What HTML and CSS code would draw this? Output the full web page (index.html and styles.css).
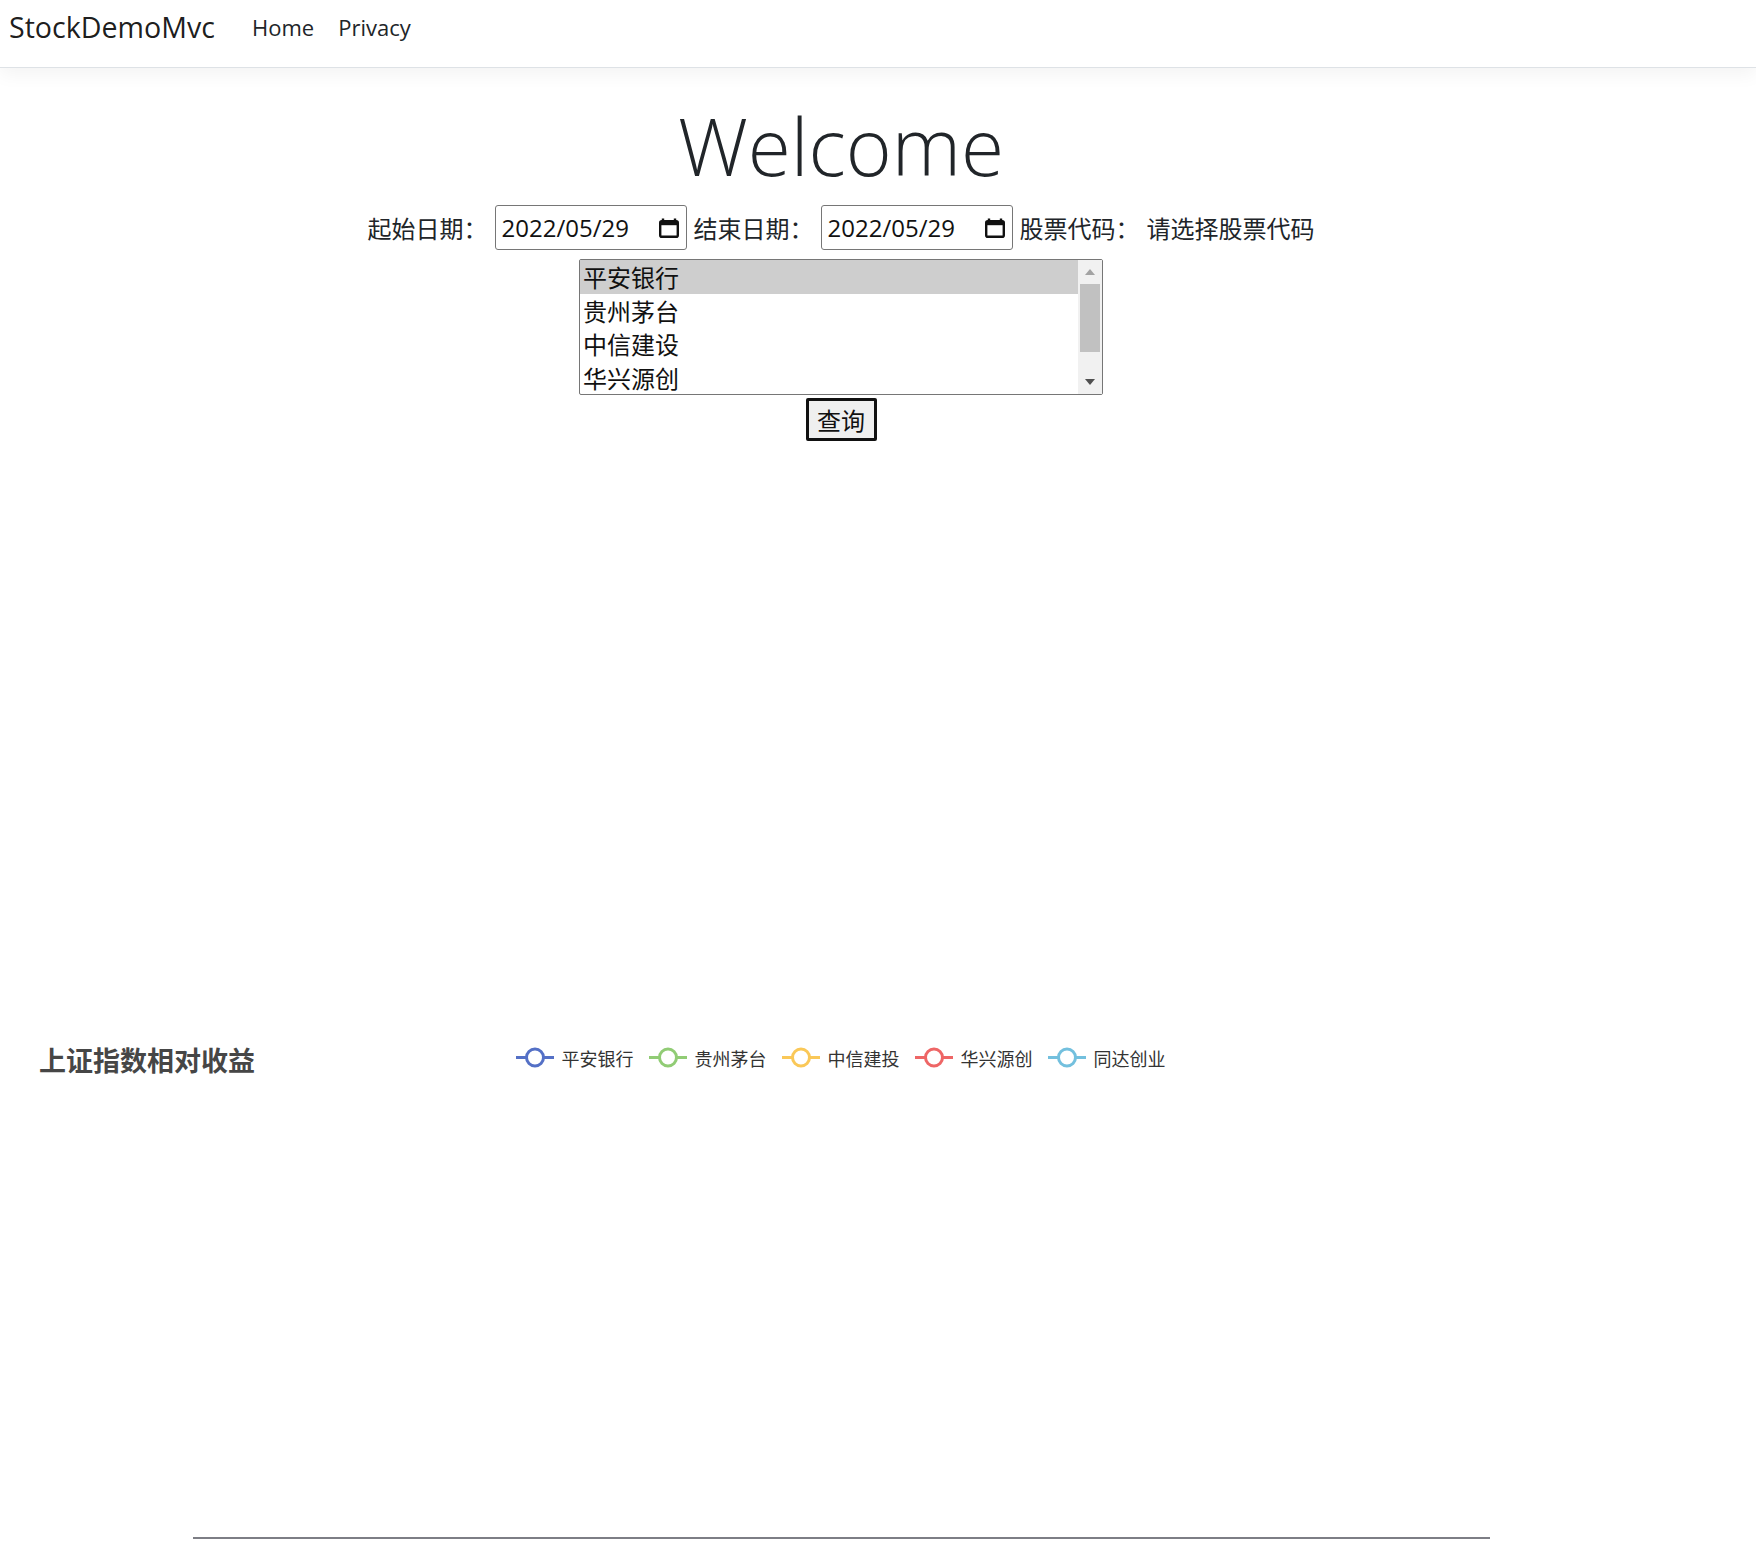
FILE: index.html
```html
<!DOCTYPE html>
<html lang="zh-CN">
<head>
<meta charset="utf-8">
<title>StockDemoMvc</title>
<link rel="stylesheet" href="styles.css">
</head>
<body>
<header class="navbar">
  <a class="brand" href="#">StockDemoMvc</a>
  <nav class="nav">
    <a class="nav-link" href="#">Home</a>
    <a class="nav-link" href="#">Privacy</a>
  </nav>
</header>
<main class="main">
  <section class="hero">
    <h1 class="title">Welcome</h1>
    <form class="query">
      <div class="query-row">
        <label class="label">起始日期：</label>
        <div class="date">
          <span class="date-text">2022/05/29</span>
          <svg class="cal" viewBox="0 0 22 22" width="22" height="22"><path d="M5 1.5v3M17 1.5v3" stroke="#111" stroke-width="2.4" fill="none"/><rect x="2.2" y="4.2" width="17.6" height="15.6" rx="1.6" fill="none" stroke="#111" stroke-width="2.4"/><rect x="2.2" y="4.2" width="17.6" height="4" fill="#111"/></svg>
        </div>
        <label class="label">结束日期：</label>
        <div class="date">
          <span class="date-text">2022/05/29</span>
          <svg class="cal" viewBox="0 0 22 22" width="22" height="22"><path d="M5 1.5v3M17 1.5v3" stroke="#111" stroke-width="2.4" fill="none"/><rect x="2.2" y="4.2" width="17.6" height="15.6" rx="1.6" fill="none" stroke="#111" stroke-width="2.4"/><rect x="2.2" y="4.2" width="17.6" height="4" fill="#111"/></svg>
        </div>
        <label class="label">股票代码：</label>
        <span class="label hint">请选择股票代码</span>
      </div>
      <div class="listbox">
        <div class="options">
          <div class="option selected">平安银行</div>
          <div class="option">贵州茅台</div>
          <div class="option">中信建设</div>
          <div class="option">华兴源创</div>
        </div>
        <div class="scrollbar">
          <div class="sb-btn"><svg width="10" height="6" viewBox="0 0 10 6"><path d="M0 6L5 0L10 6Z" fill="#a3a3a3"/></svg></div>
          <div class="sb-track"><div class="sb-thumb"></div></div>
          <div class="sb-btn"><svg width="10" height="6" viewBox="0 0 10 6"><path d="M0 0L5 6L10 0Z" fill="#505050"/></svg></div>
        </div>
      </div>
      <button class="btn" type="button">查询</button>
    </form>
  </section>
  <div class="chart-empty"></div>
  <section class="chart">
    <div class="chart-head">
      <div class="chart-title">上证指数相对收益</div>
      <div class="legend">
        <div class="legend-item"><svg width="38" height="21" viewBox="0 0 38 21"><line x1="0" y1="10.5" x2="38" y2="10.5" stroke="#5470c6" stroke-width="3"/><circle cx="19" cy="10.5" r="8.5" fill="#fff" stroke="#5470c6" stroke-width="3"/></svg><span>平安银行</span></div>
        <div class="legend-item"><svg width="38" height="21" viewBox="0 0 38 21"><line x1="0" y1="10.5" x2="38" y2="10.5" stroke="#91cc75" stroke-width="3"/><circle cx="19" cy="10.5" r="8.5" fill="#fff" stroke="#91cc75" stroke-width="3"/></svg><span>贵州茅台</span></div>
        <div class="legend-item"><svg width="38" height="21" viewBox="0 0 38 21"><line x1="0" y1="10.5" x2="38" y2="10.5" stroke="#fac858" stroke-width="3"/><circle cx="19" cy="10.5" r="8.5" fill="#fff" stroke="#fac858" stroke-width="3"/></svg><span>中信建投</span></div>
        <div class="legend-item"><svg width="38" height="21" viewBox="0 0 38 21"><line x1="0" y1="10.5" x2="38" y2="10.5" stroke="#ee6666" stroke-width="3"/><circle cx="19" cy="10.5" r="8.5" fill="#fff" stroke="#ee6666" stroke-width="3"/></svg><span>华兴源创</span></div>
        <div class="legend-item"><svg width="38" height="21" viewBox="0 0 38 21"><line x1="0" y1="10.5" x2="38" y2="10.5" stroke="#73c0de" stroke-width="3"/><circle cx="19" cy="10.5" r="8.5" fill="#fff" stroke="#73c0de" stroke-width="3"/></svg><span>同达创业</span></div>
      </div>
      <div></div>
    </div>
    <div class="axis"></div>
  </section>
</main>
</body>
</html>
```
FILE: styles.css
```css
html, body {
  margin: 0;
  padding: 0;
  height: 100%;
  overflow: hidden;
}
body {
  font-family: "Open Sans", "Noto Sans CJK SC", sans-serif;
  color: #212529;
  background: #fff;
}
.navbar {
  box-sizing: border-box;
  display: flex;
  align-items: center;
  height: 68px;
  padding: 0 0 14px 9px;
  border-bottom: 1px solid #dee2e6;
  box-shadow: 0 6px 18px rgba(0, 0, 0, 0.05);
}
.brand {
  font-size: 28.6px;
  color: rgba(0, 0, 0, 0.9);
  text-decoration: none;
  margin-right: 25px;
}
.nav {
  display: flex;
}
.nav-link {
  font-size: 22px;
  color: #212529;
  text-decoration: none;
  padding: 0 12px;
}
.main {
  width: 1620px;
  margin-left: 31px;
  padding-top: 24px;
}
.hero {
  display: flex;
  flex-direction: column;
  align-items: center;
}
.title {
  margin: 0 0 9px;
  padding-top: 3px;
  font-weight: 300;
  font-size: 78.4px;
  line-height: 101px;
  color: #212529;
}
.query {
  display: flex;
  flex-direction: column;
  align-items: center;
}
.query-row {
  display: flex;
  align-items: center;
  gap: 7px;
  height: 45px;
}
.label {
  font-family: "Noto Sans CJK SC", sans-serif;
  font-size: 24px;
  color: #212529;
}
.date {
  box-sizing: border-box;
  width: 192px;
  height: 45px;
  border: 1px solid #767676;
  border-radius: 3px;
  display: flex;
  align-items: center;
  justify-content: space-between;
  padding: 0 6px 0 6px;
}
.date-text {
  font-size: 24px;
  color: #111;
}
.cal {
  display: block;
}
.listbox {
  box-sizing: border-box;
  margin-top: 9px;
  width: 524px;
  height: 136px;
  border: 1px solid #767676;
  border-radius: 2px;
  display: flex;
}
.options {
  flex: 1;
}
.option {
  font-family: "Noto Sans CJK SC", sans-serif;
  font-size: 24px;
  height: 33.5px;
  line-height: 33.5px;
  padding-left: 3px;
  color: #111;
}
.option.selected {
  background: #cecece;
}
.scrollbar {
  width: 24px;
  background: #f1f1f1;
  display: flex;
  flex-direction: column;
}
.sb-btn {
  height: 24px;
  display: flex;
  align-items: center;
  justify-content: center;
}
.sb-track {
  flex: 1;
  padding: 0 2px;
}
.sb-thumb {
  height: 68px;
  background: #c1c1c1;
}
.btn {
  margin-top: 3px;
  box-sizing: border-box;
  width: 71px;
  height: 43px;
  border: 3px solid #111;
  border-radius: 2px;
  background: #efefef;
  font-family: "Noto Sans CJK SC", sans-serif;
  font-size: 24px;
  color: #111;
  padding: 0;
  line-height: 1;
}
.chart-empty {
  height: 599px;
}
.chart {
  height: 501px;
  display: flex;
  flex-direction: column;
}
.chart-head {
  display: grid;
  grid-template-columns: 1fr auto 1fr;
  align-items: start;
}
.chart-title {
  padding: 6px 0 0 8px;
  font-family: "Noto Sans CJK SC", sans-serif;
  font-weight: 700;
  font-size: 27px;
  line-height: 28px;
  color: #464646;
}
.legend {
  display: flex;
  gap: 15px;
  padding-top: 7px;
  margin-left: -1px;
}
.legend-item {
  display: flex;
  align-items: center;
  gap: 8px;
  height: 21px;
  font-family: "Noto Sans CJK SC", sans-serif;
  font-size: 18px;
  color: #333;
}
.legend-item svg {
  display: block;
}
.axis {
  margin: auto 161px 2px 162px;
  height: 2px;
  background: #7d7e85;
}
```
